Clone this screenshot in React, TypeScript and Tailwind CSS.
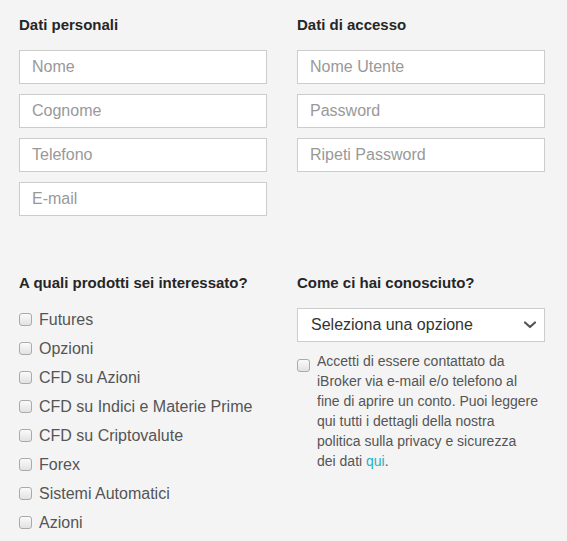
const products = [
	"Futures",
	"Opzioni",
	"CFD su Azioni",
	"CFD su Indici e Materie Prime",
	"CFD su Criptovalute",
	"Forex",
	"Sistemi Automatici",
	"Azioni",
];

function Box() {
	return (
		<span className="inline-block h-[13px] w-[13px] shrink-0 rounded-[3px] border border-[#aaaaaa] bg-gradient-to-b from-[#fafafa] to-[#e2e2e2]" />
	);
}

function Field({ placeholder }: { placeholder: string }) {
	return (
		<input
			placeholder={placeholder}
			className="h-[34px] w-full border border-[#cccccc] bg-white px-3 text-[16px] text-[#333] outline-none placeholder:text-[#999]"
		/>
	);
}

function Heading({ children }: { children: string }) {
	return <h3 className="h-5 text-[15px] font-bold leading-5 text-[#262626]">{children}</h3>;
}

export default function App() {
	return (
		<div className="min-h-[541px] bg-[#f4f4f4] pl-[19px] pt-[15px] font-['Liberation_Sans',Arial,sans-serif]">
			<div className="flex gap-[30px]">
				<div className="w-[248px]">
					<Heading>Dati personali</Heading>
					<div className="mt-[15px] flex flex-col gap-[10px]">
						<Field placeholder="Nome" />
						<Field placeholder="Cognome" />
						<Field placeholder="Telefono" />
						<Field placeholder="E-mail" />
					</div>
				</div>
				<div className="w-[248px]">
					<Heading>Dati di accesso</Heading>
					<div className="mt-[15px] flex flex-col gap-[10px]">
						<Field placeholder="Nome Utente" />
						<Field placeholder="Password" />
						<Field placeholder="Ripeti Password" />
					</div>
				</div>
			</div>

			<div className="mt-[57px] flex gap-[30px]">
				<div className="w-[248px]">
					<Heading>A quali prodotti sei interessato?</Heading>
					<ul className="mt-[12px]">
						{products.map((p) => (
							<li key={p} className="flex h-[29px] items-center gap-[7px] text-[16px] text-[#555]">
								<Box />
								{p}
							</li>
						))}
					</ul>
				</div>
				<div className="w-[248px]">
					<Heading>Come ci hai conosciuto?</Heading>
					<div className="mt-[15px] flex h-[34px] items-center justify-between border border-[#cccccc] bg-white pl-[13px] pr-[8px] text-[16px] text-[#333]">
						<span>Seleziona una opzione</span>
						<svg width="12" height="8" viewBox="0 0 12 8" fill="none">
							<path d="M1 1.5 L6 6 L11 1.5" stroke="#555" strokeWidth="2.2" strokeLinecap="round" strokeLinejoin="round" />
						</svg>
					</div>
					<div className="mt-[9px] flex gap-[7px]">
						<span className="mt-[4px]">
							<Box />
						</span>
						<p className="whitespace-nowrap text-[14px] leading-5 text-[#555]">
							Accetti di essere contattato da
							<br />
							iBroker via e-mail e/o telefono al
							<br />
							fine di aprire un conto. Puoi leggere
							<br />
							qui tutti i dettagli della nostra
							<br />
							politica sulla privacy e sicurezza
							<br />
							dei dati <a className="text-[#1fb1c9]">qui</a>.
						</p>
					</div>
				</div>
			</div>
		</div>
	);
}
